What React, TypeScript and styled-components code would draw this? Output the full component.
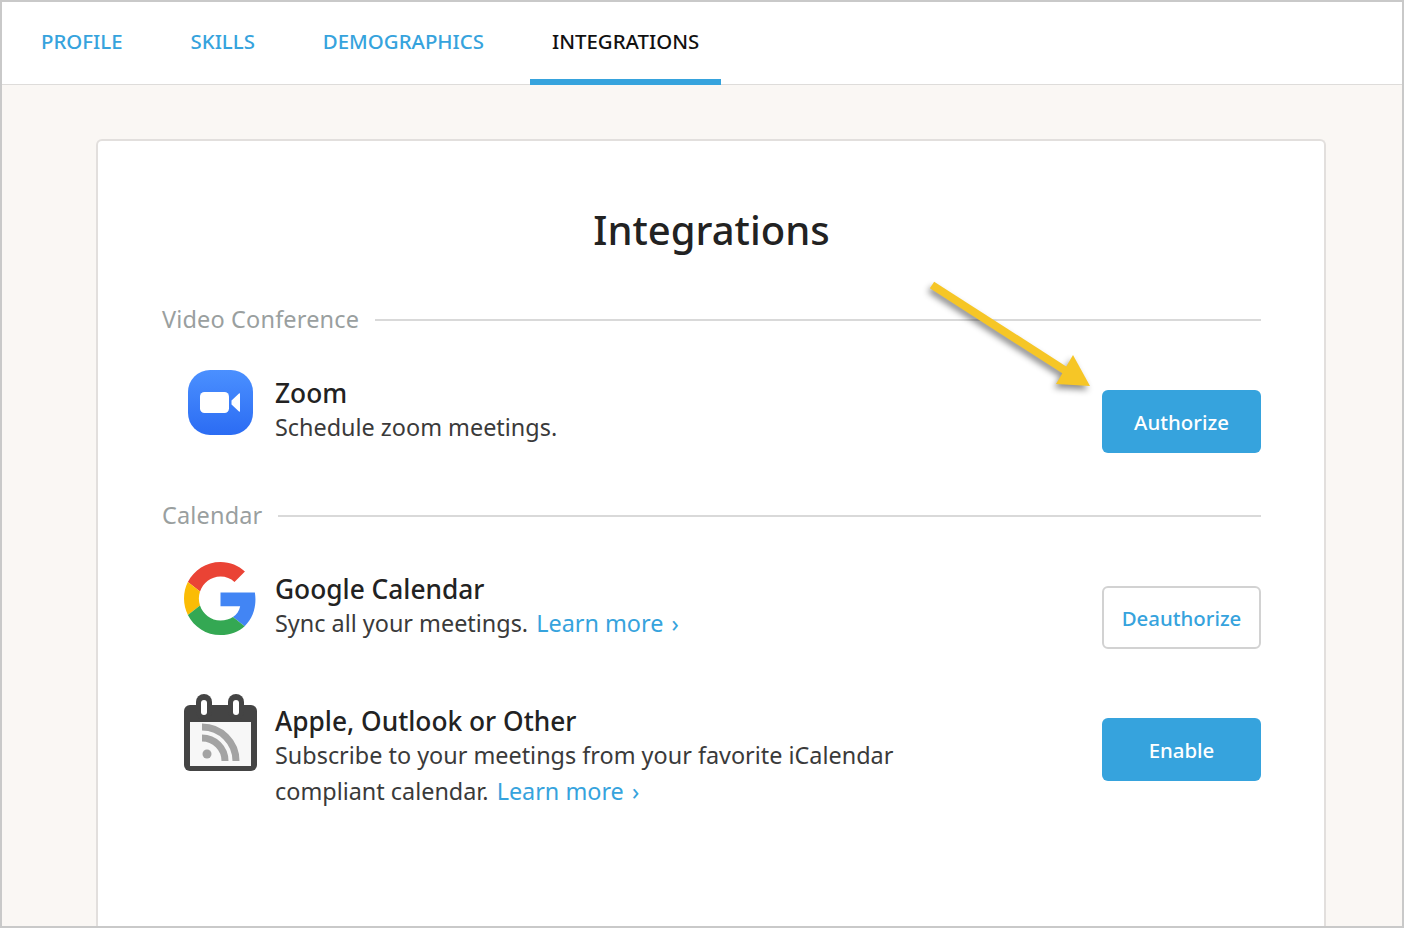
import styled, { createGlobalStyle } from 'styled-components';

const GlobalStyle = createGlobalStyle`
  html, body {
    margin: 0;
    height: 100%;
    overflow: hidden;
  }
  body {
    font-family: "Noto Sans", "Open Sans", sans-serif;
    color: #333;
  }
`;

const Frame = styled.div`
  box-sizing: border-box;
  width: 1404px;
  height: 928px;
  border: 2px solid #c9c9c9;
  background: #faf7f4;
  display: flex;
  flex-direction: column;
  overflow: hidden;
`;

const Nav = styled.nav`
  flex: none;
  box-sizing: border-box;
  height: 83px;
  background: #fff;
  border-bottom: 1px solid #dedcda;
  display: flex;
  gap: 25px;
  padding-left: 17.5px;
`;

const Tab = styled.a<{ $active?: boolean }>`
  box-sizing: border-box;
  height: 83px;
  padding: 0 21.5px;
  display: flex;
  align-items: center;
  font-size: 20.4px;
  font-weight: 500;
  color: ${(p) => (p.$active ? '#111' : '#36a3dd')};
  border-bottom: 6px solid ${(p) => (p.$active ? '#36a3dd' : 'transparent')};
`;

const Card = styled.main`
  position: relative;
  flex: 1;
  margin: 54px 76px 0 94px;
  padding: 0 63px 0 64px;
  background: #fff;
  border: 2px solid #e2dfdd;
  border-bottom: none;
  border-radius: 6px 6px 0 0;
`;

const Title = styled.h1`
  margin: 0;
  padding-top: 61px;
  height: 56px;
  line-height: 56px;
  text-align: center;
  font-size: 40px;
  font-weight: 500;
  color: #222;
`;

const SectionHead = styled.div<{ $top: number }>`
  display: flex;
  align-items: center;
  gap: 16px;
  margin-top: ${(p) => p.$top}px;
  height: 32px;
  font-size: 23.5px;
  letter-spacing: 0.15px;
  color: #9a9f9f;

  &::after {
    content: '';
    flex: 1;
    height: 2px;
    margin-top: 1px;
    background: #d9d9d9;
  }
`;

const Row = styled.div<{ $top: number; $height: number }>`
  display: flex;
  margin-top: ${(p) => p.$top}px;
  height: ${(p) => p.$height}px;
`;

const IconCell = styled.div<{ $lift?: number }>`
  flex: none;
  width: 73px;
  margin: ${(p) => -(p.$lift ?? 0)}px 18px 0 22px;
  display: flex;
  justify-content: center;
  align-items: flex-start;
`;

const Body = styled.div`
  flex: 1;
  padding-top: 7px;
`;

const Name = styled.div`
  font-size: 26.3px;
  line-height: 32px;
  font-weight: 500;
  color: #222;
`;

const Desc = styled.div`
  max-width: 640px;
  font-size: 23.4px;
  line-height: 36px;
  color: #3a3a3a;
`;

const Link = styled.a`
  margin-left: 2px;
  color: #36a3dd;
`;

const Chevron = styled.span`
  margin-left: 2px;
`;

const Btn = styled.button<{ $outline?: boolean }>`
  flex: none;
  box-sizing: border-box;
  width: 159px;
  height: 63px;
  margin-top: 20px;
  border-radius: 6px;
  border: ${(p) => (p.$outline ? '2px solid #d2d2d2' : 'none')};
  background: ${(p) => (p.$outline ? '#fff' : '#36a3dd')};
  color: ${(p) => (p.$outline ? '#36a3dd' : '#fff')};
  font: 500 20.4px "Noto Sans", sans-serif;
  padding: 0;
`;

const ArrowMark = styled.svg`
  position: absolute;
  left: 826px;
  top: 133px;
  filter: drop-shadow(-2px 4px 3px rgba(0, 0, 0, 0.45));
`;

function ZoomIcon() {
  return (
    <svg width="65" height="65" viewBox="0 0 65 65">
      <defs>
        <linearGradient id="zoomBg" x1="0" y1="0" x2="0" y2="1">
          <stop offset="0" stopColor="#4b90ff" />
          <stop offset="1" stopColor="#2b6cf3" />
        </linearGradient>
      </defs>
      <rect width="65" height="65" rx="22" fill="url(#zoomBg)" />
      <rect x="12" y="22" width="29" height="21" rx="4.5" fill="#fff" />
      <path d="M43.5 30.5 51 23.4c.6-.5 1-.3 1 .5v17.2c0 .8-.4 1-1 .5l-7.5-7.1z" fill="#fff" />
    </svg>
  );
}

function GoogleIcon() {
  return (
    <svg width="73" height="73" viewBox="0 0 48 48">
      <path fill="#EA4335" d="M24 9.5c3.54 0 6.71 1.22 9.21 3.6l6.85-6.85C35.9 2.38 30.47 0 24 0 14.62 0 6.51 5.38 2.56 13.22l7.98 6.19C12.43 13.72 17.74 9.5 24 9.5z" />
      <path fill="#4285F4" d="M46.98 24.55c0-1.57-.15-3.09-.38-4.55H24v9.02h12.94c-.58 2.96-2.26 5.48-4.78 7.18l7.73 6c4.51-4.18 7.09-10.36 7.09-17.65z" />
      <path fill="#FBBC05" d="M10.53 28.59c-.48-1.45-.76-2.99-.76-4.59s.27-3.14.76-4.59l-7.98-6.19C.92 16.46 0 20.12 0 24c0 3.88.92 7.54 2.56 10.78l7.97-6.19z" />
      <path fill="#34A853" d="M24 48c6.48 0 11.93-2.13 15.89-5.81l-7.73-6c-2.15 1.45-4.92 2.3-8.16 2.3-6.26 0-11.57-4.22-13.47-9.91l-7.98 6.19C6.51 42.62 14.62 48 24 48z" />
    </svg>
  );
}

function CalendarIcon() {
  return (
    <svg width="73" height="78" viewBox="0 0 73 78">
      <rect x="0" y="11" width="73" height="66" rx="6" fill="#444" />
      <rect x="12" y="0" width="16" height="26" rx="8" fill="#444" />
      <rect x="44" y="0" width="16" height="26" rx="8" fill="#444" />
      <rect x="17" y="6" width="6" height="15" rx="3" fill="#fff" />
      <rect x="49" y="6" width="6" height="15" rx="3" fill="#fff" />
      <rect x="6" y="28" width="61" height="44" fill="#f7f7f7" />
      <circle cx="23" cy="60" r="4.5" fill="#a3a3a3" />
      <path d="M18 44a23 23 0 0 1 23 23" fill="none" stroke="#a3a3a3" strokeWidth="7" />
      <path d="M18 33a34 34 0 0 1 34 34" fill="none" stroke="#a3a3a3" strokeWidth="7" />
    </svg>
  );
}

export default function App() {
  return (
    <>
      <GlobalStyle />
      <Frame>
        <Nav>
          <Tab>PROFILE</Tab>
          <Tab>SKILLS</Tab>
          <Tab>DEMOGRAPHICS</Tab>
          <Tab $active>INTEGRATIONS</Tab>
        </Nav>
        <Card>
          <Title>Integrations</Title>

          <SectionHead $top={45}>Video Conference</SectionHead>
          <Row $top={35} $height={129}>
            <IconCell><ZoomIcon /></IconCell>
            <Body>
              <Name>Zoom</Name>
              <Desc>Schedule zoom meetings.</Desc>
            </Body>
            <Btn>Authorize</Btn>
          </Row>

          <SectionHead $top={0}>Calendar</SectionHead>
          <Row $top={35} $height={132}>
            <IconCell $lift={4}><GoogleIcon /></IconCell>
            <Body>
              <Name>Google Calendar</Name>
              <Desc>
                Sync all your meetings. <Link>Learn more <Chevron>›</Chevron></Link>
              </Desc>
            </Body>
            <Btn $outline>Deauthorize</Btn>
          </Row>

          <Row $top={0} $height={132}>
            <IconCell $lift={4}><CalendarIcon /></IconCell>
            <Body>
              <Name>Apple, Outlook or Other</Name>
              <Desc>
                Subscribe to your meetings from your favorite iCalendar compliant calendar.{' '}
                <Link>Learn more <Chevron>›</Chevron></Link>
              </Desc>
            </Body>
            <Btn>Enable</Btn>
          </Row>

          <ArrowMark width="170" height="115" viewBox="0 0 170 115">
            <path d="M8 11 142 97" fill="none" stroke="#f6c626" strokeWidth="8" />
            <path d="M149 81 166 112 132 110z" fill="#f6c626" />
          </ArrowMark>
        </Card>
      </Frame>
    </>
  );
}
